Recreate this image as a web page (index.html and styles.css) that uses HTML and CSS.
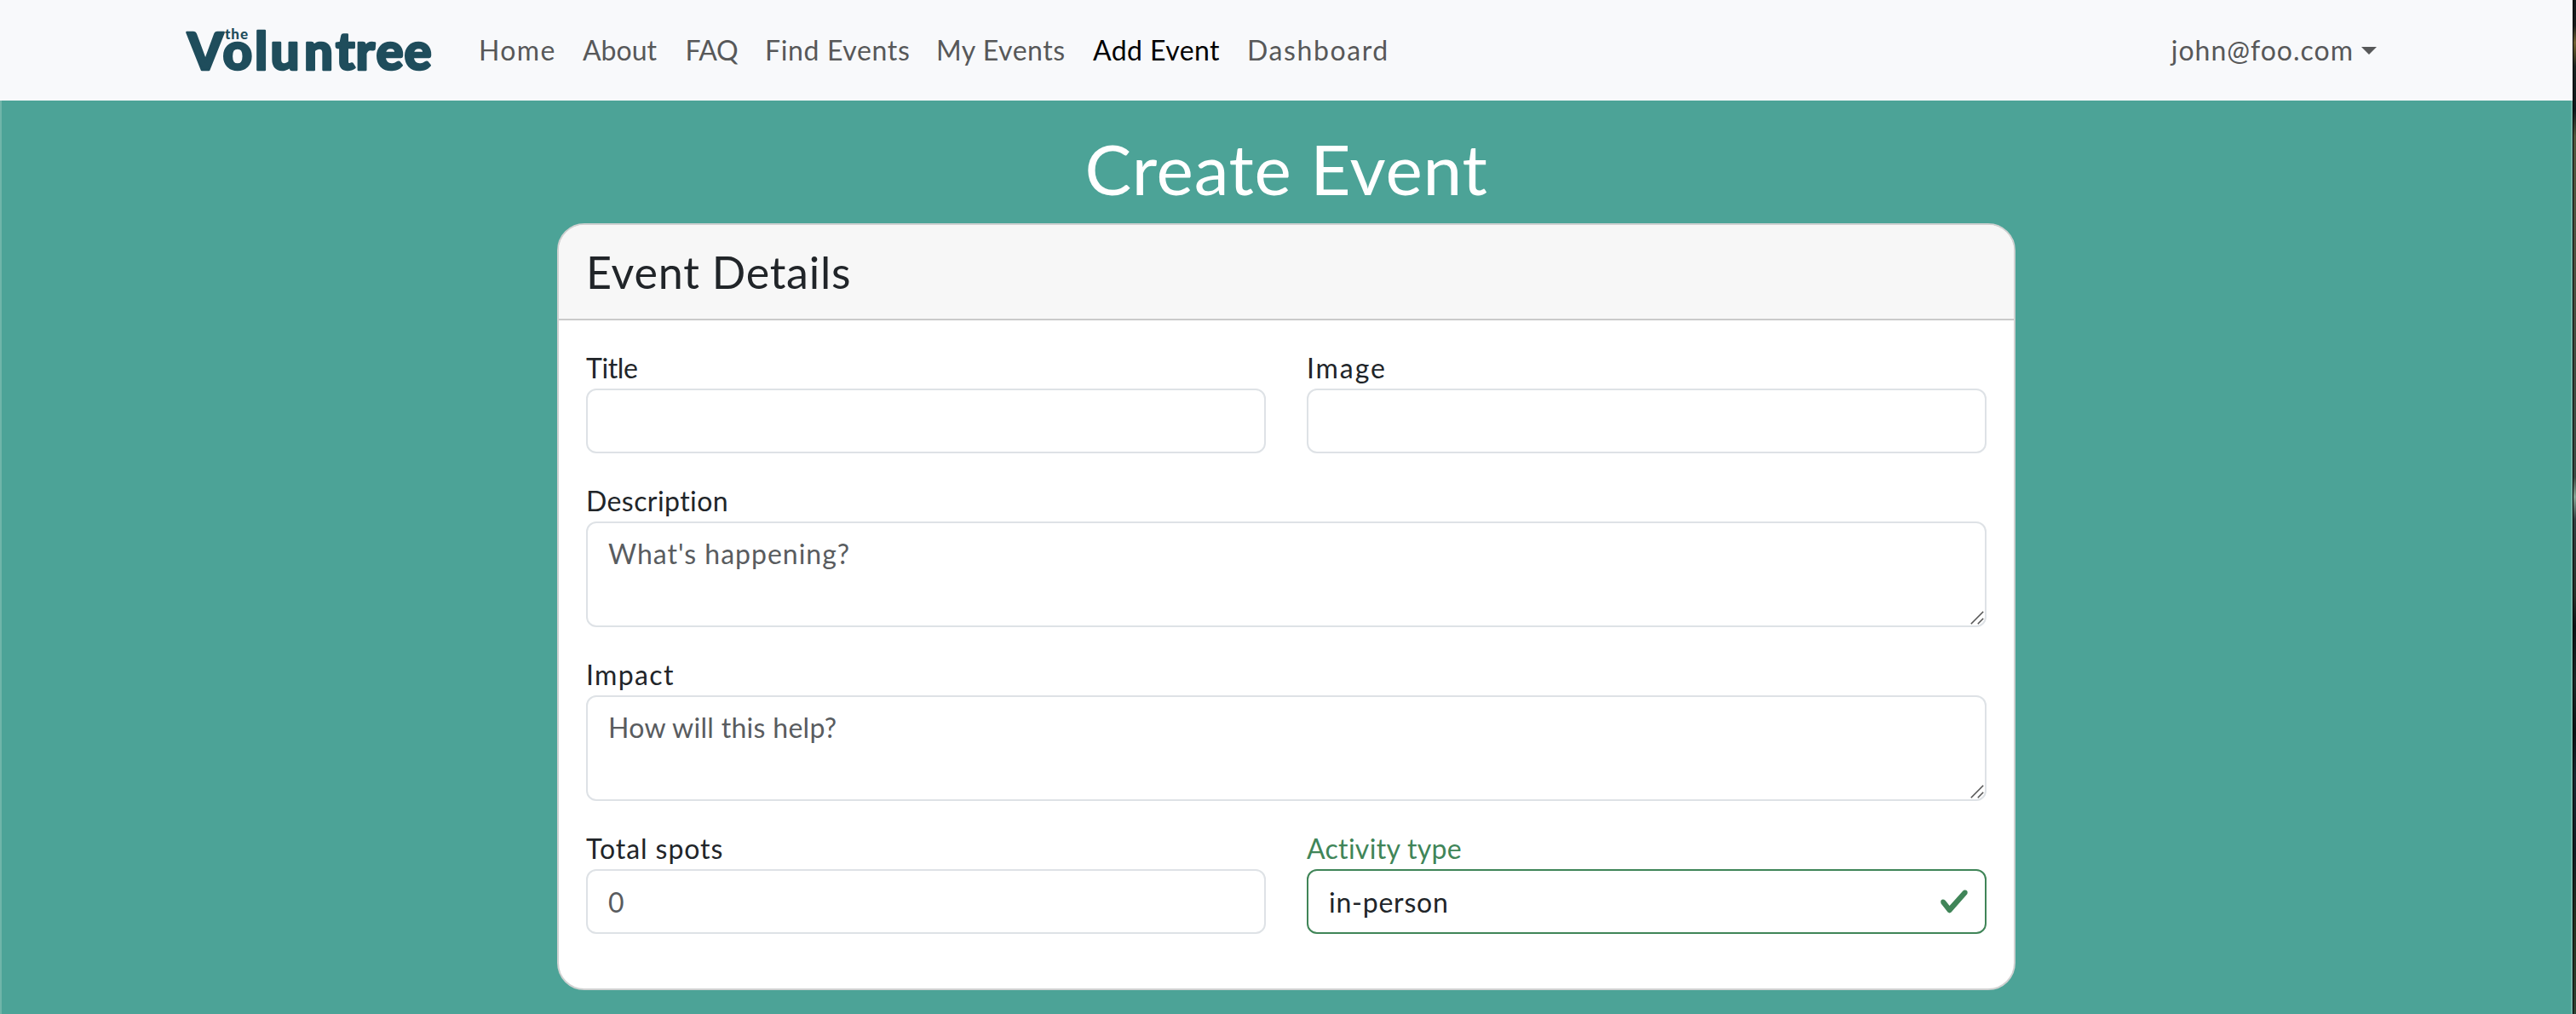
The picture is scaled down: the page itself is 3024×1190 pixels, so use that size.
FILE: index.html
```html
<!DOCTYPE html>
<html lang="en">
<head>
<meta charset="utf-8">
<title>Create Event</title>
<link rel="stylesheet" href="styles.css">
</head>
<body>
<div class="app">
  <header class="navbar">
    <a class="brand" aria-label="the Voluntree">
      <svg width="300" height="60" viewBox="0 0 300 60">
        <text class="brand-name" y="53" x="2 43.5 81 99.5 139 176 199.5 223.5 256.5">Voluntree</text>
        <text class="brand-the" x="46" y="17" textLength="27">the</text>
      </svg>
    </a>
    <nav class="links">
      <a class="ls-14">Home</a>
      <a>About</a>
      <a class="ls-neg">FAQ</a>
      <a class="ls-6">Find Events</a>
      <a class="ls-5">My Events</a>
      <a class="ls-4 active">Add Event</a>
      <a class="ls-17">Dashboard</a>
    </nav>
    <a class="user ls-10">john@foo.com<span class="caret"></span></a>
  </header>
  <main class="page">
    <h1>Create Event</h1>
    <form class="card">
      <div class="card-header"><h2>Event Details</h2></div>
      <div class="card-body">
        <div class="field"><label class="ls-neg">Title</label><input class="control" type="text"></div>
        <div class="field"><label class="ls-19">Image</label><input class="control" type="text"></div>
        <div class="field wide">
          <label class="ls-4">Description</label>
          <div class="box">
            <textarea class="control area ls-10" placeholder="What's happening?"></textarea>
            <svg class="grip" width="16" height="16" viewBox="0 0 16 16"><path d="M.8 15.2 15.2.8M8.8 15.2l6.4-6.4"/></svg>
          </div>
        </div>
        <div class="field wide">
          <label class="ls-14">Impact</label>
          <div class="box">
            <textarea class="control area ls-3" placeholder="How will this help?"></textarea>
            <svg class="grip" width="16" height="16" viewBox="0 0 16 16"><path d="M.8 15.2 15.2.8M8.8 15.2l6.4-6.4"/></svg>
          </div>
        </div>
        <div class="field"><label class="ls-9">Total spots</label><input class="control" type="text" placeholder="0"></div>
        <div class="field valid">
          <label class="ls-3">Activity type</label>
          <div class="box">
            <input class="control ls-8" type="text" value="in-person">
            <svg class="check" width="36" height="36" viewBox="0 0 8 8"><path d="M2.3 6.73.6 4.53c-.4-1.04.46-1.4 1.1-.8l1.1 1.4 3.4-3.8c.6-.63 1.6-.27 1.2.7l-4 4.6c-.43.5-.8.4-1.1.1z"/></svg>
          </div>
        </div>
      </div>
    </form>
  </main>
</div>
<div class="desktop-edge"></div>
</body>
</html>
```
FILE: styles.css
```css
* { box-sizing: border-box; }

body {
  margin: 0;
  display: flex;
  height: 1190px;
  overflow: hidden;
  background: #4ca397;
  color: #212529;
  font: 32px/48px Lato, "Open Sans", sans-serif;
}

.app { width: 3020px; display: flex; flex-direction: column; }

.desktop-edge {
  width: 4px;
  border-left: 1px solid #000;
  background: linear-gradient(#11171a 0, #171b1b 30px, #6f6032 50px, #4c4726 62px, #1a2321 78px, #10191c 130px, #50573d 160px, #4f5040 300px, #414b40 430px, #3c4a42 560px, #85a595 583px, #333f40 610px, #283028 700px, #0e1215 735px, #1c2826 800px, #0d1214 860px, #1a2830 910px, #131c22 1000px, #26301f 1080px, #2f4030 1190px);
}

/* letter-spacing steps */
.ls-neg { letter-spacing: -.4px; }
.ls-3 { letter-spacing: .3px; }
.ls-4 { letter-spacing: .43px; }
.ls-5 { letter-spacing: .52px; }
.ls-6 { letter-spacing: .65px; }
.ls-8 { letter-spacing: .77px; }
.ls-9 { letter-spacing: .94px; }
.ls-10 { letter-spacing: 1px; }
.ls-14 { letter-spacing: 1.37px; }
.ls-17 { letter-spacing: 1.6px; }
.ls-19 { letter-spacing: 1.9px; }

.navbar {
  height: 118px;
  flex: none;
  display: flex;
  align-items: center;
  padding: 0 230px 0 218px;
  background: #f8f9fb;
  color: #575859;
}
.brand { width: 344px; height: 60px; }
.brand svg { display: block; overflow: visible; }
.brand text { font-family: Lato, sans-serif; font-weight: 900; fill: #1f4d5c; }
.brand-name { font-size: 60px; stroke: #1f4d5c; stroke-width: 2.6px; stroke-linejoin: round; }
.brand-the { font-size: 17px; }
.links { display: grid; grid-template-columns: 122px 120.5px 93.5px 201px 184px 181px 170px; }
.links a { white-space: nowrap; }
.links .active { color: #000; }
.user { margin-left: auto; display: flex; align-items: center; gap: 9px; }
.caret { border: 9px solid transparent; border-top-color: #575859; border-bottom: 0; }

.page {
  flex: 1;
  display: flex;
  flex-direction: column;
  align-items: center;
  padding-top: 30px;
  border: solid #70b5a9;
  border-width: 0 2px;
}
h1 { margin: 0 0 16px; color: #fff; font-weight: 400; font-size: 82px; line-height: 98px; letter-spacing: .75px; }

.card {
  width: 1712px;
  height: 900px;
  border: 2px solid #d0d1d1;
  border-radius: 32px;
  overflow: hidden;
  background: #fff;
}
.card-header { height: 112px; padding: 24px 32px; background: #f7f7f7; border-bottom: 2px solid #cacaca; }
h2 { margin: 0; font-weight: 400; font-size: 52px; line-height: 62px; letter-spacing: .78px; }
.card-body {
  display: grid;
  grid-template-columns: 1fr 1fr;
  gap: 32px 48px;
  padding: 32px;
}
.field { display: flex; flex-direction: column; }
.wide { grid-column: span 2; }
.box { position: relative; display: flex; }
.control {
  width: 100%;
  height: 76px;
  padding: 12px 24px;
  border: 2px solid #dee2e6;
  border-radius: 12px;
  background: #fff;
  color: inherit;
  font-family: inherit;
  font-size: 32px;
  line-height: 48px;
  outline: none;
}
.area { height: 124px; resize: none; overflow: hidden; }
.control::placeholder { color: #595c5f; opacity: 1; }
.grip { position: absolute; right: 3px; bottom: 3px; fill: none; stroke: #555; stroke-width: 1.6; }
.valid label { color: #408558; }
.valid .control { border-color: #408558; }
.check { position: absolute; right: 20px; top: 20px; fill: #408558; }
```
